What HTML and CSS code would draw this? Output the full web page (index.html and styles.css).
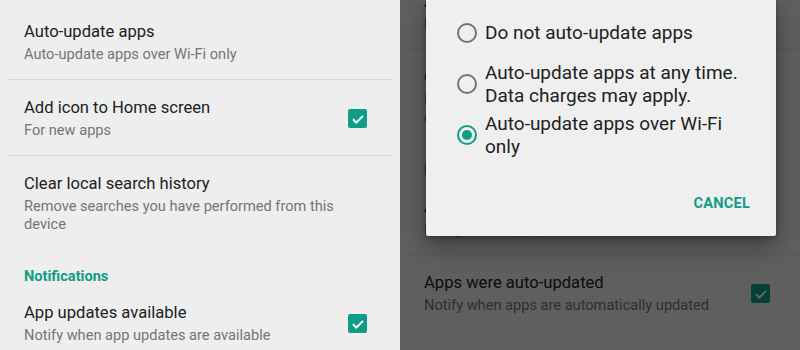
FILE: index.html
```html
<!DOCTYPE html>
<html lang="en">
<head>
  <meta charset="UTF-8" />
  <meta name="viewport" content="width=device-width, initial-scale=1.0">
  <title>Settings – Auto-update apps</title>

  <link rel="stylesheet" href="styles.css">
</head>
<body>

  <div class="screens">

    <!-- Settings list -->
    <div class="pane">
      <div class="list list-left">
        <div class="category">General</div>
        <div class="row">
          <div class="text">
            <div class="title">Auto-update apps</div>
            <div class="summary">Auto-update apps over Wi-Fi only</div>
          </div>
        </div>
        <div class="row">
          <div class="text">
            <div class="title">Add icon to Home screen</div>
            <div class="summary">For new apps</div>
          </div>
          <span class="checkbox"><svg viewBox="0 0 18 18" width="18" height="18"><path d="M4 9.3l3.3 3.3L14 5.9" /></svg></span>
        </div>
        <div class="row">
          <div class="text">
            <div class="title">Clear local search history</div>
            <div class="summary">Remove searches you have performed from this device</div>
          </div>
        </div>
        <div class="category">Notifications</div>
        <div class="row">
          <div class="text">
            <div class="title">App updates available</div>
            <div class="summary">Notify when app updates are available</div>
          </div>
          <span class="checkbox"><svg viewBox="0 0 18 18" width="18" height="18"><path d="M4 9.3l3.3 3.3L14 5.9" /></svg></span>
        </div>
      </div>
    </div>

    <!-- Same list, with the auto-update dialog open -->
    <div class="pane pane-dim">
      <div class="list list-right">
        <div class="category">General</div>
        <div class="row">
          <div class="text">
            <div class="title">Auto-update apps</div>
            <div class="summary">Auto-update apps over Wi-Fi only</div>
          </div>
        </div>
        <div class="row">
          <div class="text">
            <div class="title">Add icon to Home screen</div>
            <div class="summary">For new apps</div>
          </div>
          <span class="checkbox"><svg viewBox="0 0 18 18" width="18" height="18"><path d="M4 9.3l3.3 3.3L14 5.9" /></svg></span>
        </div>
        <div class="row">
          <div class="text">
            <div class="title">Clear local search history</div>
            <div class="summary">Remove searches you have performed from this device</div>
          </div>
        </div>
        <div class="category">Notifications</div>
        <div class="row">
          <div class="text">
            <div class="title">App updates available</div>
            <div class="summary">Notify when app updates are available</div>
          </div>
          <span class="checkbox"><svg viewBox="0 0 18 18" width="18" height="18"><path d="M4 9.3l3.3 3.3L14 5.9" /></svg></span>
        </div>
        <div class="row">
          <div class="text">
            <div class="title">Apps were auto-updated</div>
            <div class="summary">Notify when apps are automatically updated</div>
          </div>
          <span class="checkbox"><svg viewBox="0 0 18 18" width="18" height="18"><path d="M4 9.3l3.3 3.3L14 5.9" /></svg></span>
        </div>
        <div class="category">User controls</div>
      </div>

      <div class="scrim"></div>

      <div class="dialog">
        <div class="option">
          <span class="radio"></span>
          <span class="option-label">Do not auto-update apps</span>
        </div>
        <div class="option">
          <span class="radio"></span>
          <span class="option-label">Auto-update apps at any time. Data charges may apply.</span>
        </div>
        <div class="option">
          <span class="radio checked"></span>
          <span class="option-label">Auto-update apps over Wi-Fi only</span>
        </div>
        <div class="actions">
          <button class="text-btn">Cancel</button>
        </div>
      </div>
    </div>

  </div>

</body>
</html>
```

FILE: styles.css
```css
:root {
  --teal: #109d86;
  --text-primary: #212121;
  --text-secondary: #757575;
  --bg: #eeeeee;
  --bg-dialog: #efefef;
  --divider: #d9d9d9;
}

* {
  box-sizing: border-box;
  margin: 0;
  padding: 0;
}

body {
  font-family: Roboto, 'Noto Sans', sans-serif;
  background: var(--bg);
  color: var(--text-primary);
}

.screens {
  display: flex;
  height: 350px;
  overflow: hidden;
}

.pane {
  width: 400px;
  height: 350px;
  background: var(--bg);
  overflow: hidden;
}

.pane-dim {
  position: relative;
}

/* Preference list */
.list-left {
  margin: -32px 8px 0;
}

.list-right {
  margin: -138px 0 0 8px;
}

.category {
  padding: 18px 16px 0;
  font-size: 14.6px;
  line-height: 18px;
  font-weight: 700;
  color: var(--teal);
}

.row {
  display: flex;
  align-items: center;
  padding: 18px 25px 16px 16px;
}

.list-right .row {
  padding-right: 30px;
}

.row + .row {
  border-top: 1px solid var(--divider);
}

.text {
  flex: 1;
}

.title {
  font-size: 16.6px;
  line-height: 20px;
  color: var(--text-primary);
}

.summary {
  margin-top: 3px;
  font-size: 14.6px;
  line-height: 18px;
  color: var(--text-secondary);
  padding-right: 30px;
}

.checkbox {
  width: 19px;
  height: 19px;
  border-radius: 2px;
  background: var(--teal);
  flex-shrink: 0;
}

.checkbox svg {
  display: block;
  margin: 0.5px;
  fill: none;
  stroke: #ffffff;
  stroke-width: 2;
}

/* Dialog over the dimmed list */
.scrim {
  position: absolute;
  inset: 0;
  background: rgba(0, 0, 0, 0.6);
}

.dialog {
  position: absolute;
  top: 0;
  left: 26px;
  width: 350px;
  background: var(--bg-dialog);
  border-radius: 0 0 2px 2px;
  box-shadow: 0 10px 24px rgba(0, 0, 0, 0.35), 0 2px 5px rgba(0, 0, 0, 0.3);
  padding: 7px 22px 15px 31px;
}

.option {
  display: flex;
  align-items: center;
  min-height: 51px;
  padding: 2px 0;
}

.radio {
  width: 20px;
  height: 20px;
  border: 2px solid #737373;
  border-radius: 50%;
  flex-shrink: 0;
  margin-right: 8px;
  display: flex;
  align-items: center;
  justify-content: center;
}

.radio.checked {
  border-color: var(--teal);
}

.radio.checked::after {
  content: '';
  width: 10px;
  height: 10px;
  border-radius: 50%;
  background: var(--teal);
}

.option-label {
  font-size: 19px;
  line-height: 23px;
  color: var(--text-primary);
}

.actions {
  display: flex;
  justify-content: flex-end;
  margin-top: 25px;
}

.text-btn {
  font-family: inherit;
  background: none;
  border: none;
  height: 36px;
  padding: 0 4px;
  font-size: 14.6px;
  font-weight: 700;
  letter-spacing: 0.2px;
  text-transform: uppercase;
  color: var(--teal);
}
```
